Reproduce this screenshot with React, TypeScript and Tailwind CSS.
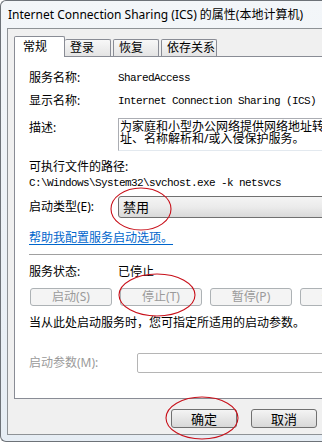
import React from 'react';

type BtnProps = { children: React.ReactNode; disabled?: boolean; className?: string };

function PushButton({ children, disabled = false, className = '' }: BtnProps) {
  const look = disabled
    ? 'border-[#adb2b5] bg-[#f4f4f4] text-[#9a9a9a]'
    : 'border-[#707070] bg-gradient-to-b from-[#f4f4f4] to-[#d8d8d8] text-black';
  return (
    <div className={`flex shrink-0 items-center justify-center rounded-[3px] border text-[12px] leading-[14px] ${look} ${className}`}>
      {children}
    </div>
  );
}

function Row({ label, children, className = '' }: { label: string; children?: React.ReactNode; className?: string }) {
  return (
    <div className={`flex h-[18px] items-center whitespace-nowrap ${className}`}>
      <div className="w-[89px] shrink-0">{label}</div>
      {children}
    </div>
  );
}

export default function App() {
  return (
    <div className="relative h-[442px] w-[322px] overflow-hidden rounded-l-[6px] border border-r-0 border-[#6d7278] bg-gradient-to-b from-[#f3f6f9] to-[#e6edf4] font-['Noto_Sans','Noto_Sans_CJK_SC',sans-serif] text-[12px] text-black">
      {/* title bar */}
      <div className="h-[27px] whitespace-nowrap pl-[7px] pt-[6px] text-[12px] leading-[16px] text-black">
        Internet Connection Sharing (ICS) 的属性(本地计算机)
      </div>

      {/* client area */}
      <div className="ml-[6px] h-[407px] border border-r-0 border-[#8e9296] bg-[#f0f0f0] pt-[7px]">
        {/* tabs */}
        <div className="flex h-[20px] items-end pl-[6px] leading-[16px]">
          <div className="relative z-10 -mb-px h-[21px] w-[51px] rounded-t-[2px] border border-b-0 border-[#898c95] bg-white pl-[8px] pt-[2px]">
            常规
          </div>
          <div className="h-[17px] w-[46px] rounded-t-[2px] border border-b-0 border-l-0 border-[#898c95] bg-gradient-to-b from-[#f8f8f8] to-[#e4e4e4] pl-[5px]">
            登录
          </div>
          <div className="ml-[2px] h-[17px] w-[46px] rounded-t-[2px] border border-b-0 border-[#898c95] bg-gradient-to-b from-[#f8f8f8] to-[#e4e4e4] pl-[5px]">
            恢复
          </div>
          <div className="ml-[2px] h-[17px] w-[56px] rounded-t-[2px] border border-b-0 border-[#898c95] bg-gradient-to-b from-[#f8f8f8] to-[#e4e4e4] pl-[5px]">
            依存关系
          </div>
        </div>

        {/* panel */}
        <div className="ml-[6px] h-[343px] w-[330px] border border-[#898c95] bg-white pl-[14px] pt-[12px] leading-[16px]">
          <Row label="服务名称:">
            <span className="font-['Liberation_Mono',monospace] text-[11px] tracking-[-0.6px]">SharedAccess</span>
          </Row>
          <Row label="显示名称:" className="mt-[5px]">
            <span className="font-['Liberation_Mono',monospace] text-[11px] tracking-[-0.6px]">Internet Connection Sharing (ICS)</span>
          </Row>

          <div className="mt-[8px] flex items-start">
            <div className="mt-[1px] h-[18px] w-[89px] shrink-0 leading-[18px]">描述:</div>
            <div className="h-[33px] flex-1 overflow-hidden whitespace-nowrap border border-[#abadb3] border-b-[#e3e9ef] pl-[1px] pt-[2px] text-[12px] leading-[12px]">
              <div>为家庭和小型办公网络提供网络地址转换、寻</div>
              <div>址、名称解析和/或入侵保护服务。</div>
            </div>
          </div>

          <div className="mt-[7px] flex h-[18px] items-center">可执行文件的路径:</div>
          <div className="h-[14px] whitespace-nowrap font-['Liberation_Mono',monospace] text-[11px] leading-[14px] tracking-[-0.6px]">
            C:\Windows\System32\svchost.exe -k netsvcs
          </div>

          <div className="mt-[6px] flex h-[22px] items-center">
            <div className="w-[89px] shrink-0">启动类型(E):</div>
            <div className="flex h-[22px] flex-1 items-center rounded-[3px] border border-[#707070] bg-gradient-to-b from-[#f4f4f4] via-[#ebebeb] to-[#d9d9d9] pl-[4px] text-[13px]">
              禁用
            </div>
          </div>

          <div className="mt-[12px] flex h-[16px] items-center">
            <span className="text-[#0066cc] underline decoration-[#0066cc] underline-offset-2">帮助我配置服务启动选项。</span>
          </div>

          <div className="mt-[8px] h-px border-t border-[#a0a0a0]" />

          <Row label="服务状态:" className="mt-[8px]">
            <span>已停止</span>
          </Row>

          <div className="mt-[7px] flex gap-[8px] pl-[1px]">
            <PushButton disabled className="h-[18px] w-[82px]">启动(S)</PushButton>
            <PushButton disabled className="h-[18px] w-[82px]">停止(T)</PushButton>
            <PushButton disabled className="h-[18px] w-[82px]">暂停(P)</PushButton>
            <PushButton disabled className="h-[18px] w-[82px]">恢复(R)</PushButton>
          </div>

          <div className="mt-[8px] flex h-[18px] items-center whitespace-nowrap">
            当从此处启动服务时，您可指定所适用的启动参数。
          </div>

          <div className="mt-[21px] flex h-[20px] items-center">
            <div className="w-[108px] shrink-0 text-[#9a9a9a]">启动参数(M):</div>
            <div className="h-[20px] flex-1 rounded-[2px] border border-[#b5b5b5] bg-white" />
          </div>
        </div>

        {/* dialog buttons */}
        <div className="mt-[10px] flex gap-[14px] pl-[163px] leading-[16px]">
          <PushButton className="h-[19px] w-[66px] text-[13px]">确定</PushButton>
          <PushButton className="h-[19px] w-[66px] text-[13px]">取消</PushButton>
        </div>
      </div>

      {/* red hand-drawn marks */}
      <svg className="pointer-events-none absolute left-0 top-0" width="322" height="442" viewBox="0 0 322 442">
        <ellipse cx="140" cy="208" rx="30" ry="21" fill="none" stroke="#c8101a" strokeWidth="1.1" />
        <ellipse cx="156" cy="294" rx="38" ry="21" fill="none" stroke="#c8101a" strokeWidth="1.1" />
        <ellipse cx="201" cy="417" rx="36" ry="21" fill="none" stroke="#c8101a" strokeWidth="1.1" />
      </svg>
    </div>
  );
}
